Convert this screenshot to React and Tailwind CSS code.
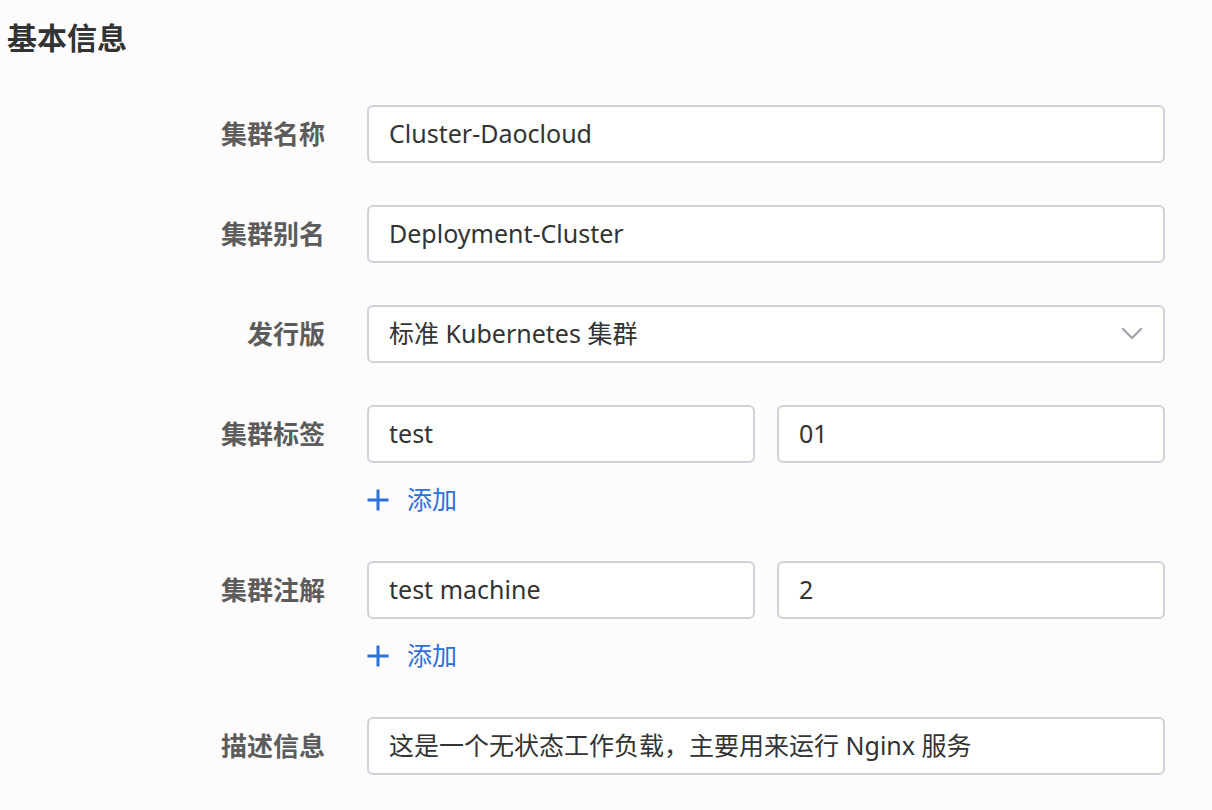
import React from 'react'

const font = "font-['Noto_Sans','Noto_Sans_CJK_SC',sans-serif]"

const Field = ({ value, select }) => (
  <div className="h-[58px] rounded-[6px] border-2 border-[#cfd2da] bg-white flex items-center pl-[20px] pr-[20px]">
    <span className="flex-1 text-[25px] text-[#333333]">{value}</span>
    {select && (
      <svg width="22" height="14" viewBox="0 0 22 14" fill="none">
        <path d="M2 2l9 9 9-9" stroke="#9ea2ab" strokeWidth="2.2" strokeLinecap="round" strokeLinejoin="round" />
      </svg>
    )}
  </div>
)

const AddLink = () => (
  <button className="flex items-center gap-[18px] h-[30px] mt-[22px] mb-[4px] text-[#2d6fdb] text-[25px]">
    <svg width="22" height="22" viewBox="0 0 22 22">
      <path d="M11 2v18M2 11h18" stroke="#2d6fdb" strokeWidth="3" strokeLinecap="square" />
    </svg>
    <span>添加</span>
  </button>
)

const Row = ({ label, children, extra, cols }) => (
  <div className="flex">
    <div className="w-[325px] h-[58px] flex items-center justify-end text-[26px] font-bold text-[#5c5c5c]">
      {label}
    </div>
    <div className="ml-[42px] w-[798px]">
      <div className={cols ? 'grid grid-cols-2 gap-[22px]' : 'grid grid-cols-1'}>{children}</div>
      {extra}
    </div>
  </div>
)

export default function App() {
  return (
    <div className={`min-h-[810px] w-[1212px] bg-[#fdfbfc] ${font}`}>
      <h2 className="pt-[19px] pl-[7px] text-[30px] font-bold text-[#333333] leading-[38px]">基本信息</h2>
      <div className="mt-[48px] flex flex-col gap-[42px]">
        <Row label="集群名称">
          <Field value="Cluster-Daocloud" />
        </Row>
        <Row label="集群别名">
          <Field value="Deployment-Cluster" />
        </Row>
        <Row label="发行版">
          <Field value="标准 Kubernetes 集群" select />
        </Row>
        <Row label="集群标签" cols extra={<AddLink />}>
          <Field value="test" />
          <Field value="01" />
        </Row>
        <Row label="集群注解" cols extra={<AddLink />}>
          <Field value="test machine" />
          <Field value="2" />
        </Row>
        <Row label="描述信息">
          <Field value="这是一个无状态工作负载，主要用来运行 Nginx 服务" />
        </Row>
      </div>
    </div>
  )
}
